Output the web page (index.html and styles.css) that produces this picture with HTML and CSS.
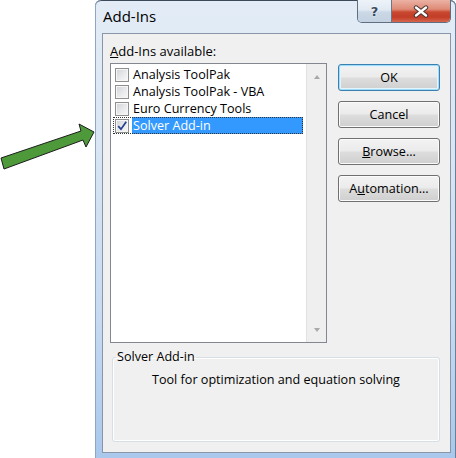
FILE: index.html
```html
<!DOCTYPE html>
<html lang="en">
<head>
<meta charset="utf-8">
<title>Add-Ins</title>
<link rel="stylesheet" href="styles.css">
</head>
<body>
<div class="stage">
  <svg class="arrow" width="100" height="180" viewBox="0 0 100 180" aria-hidden="true">
    <polygon points="1,158 81,131 79,124 94,132 86,147 83,140 4,169" fill="#4e9a3a" stroke="#1c1c1c" stroke-width="1" stroke-linejoin="miter"/>
  </svg>
  <div class="window">
    <div class="titlebar">
      <span class="title">Add-Ins</span>
      <div class="caps">
        <div class="cap help">?</div>
        <div class="cap close">
          <svg width="16" height="13" viewBox="0 0 16 13" aria-hidden="true">
            <path d="M3 2.5 L13 10.5 M13 2.5 L3 10.5" stroke="#4a3330" stroke-width="4.4" stroke-linecap="round"/>
            <path d="M3 2.5 L13 10.5 M13 2.5 L3 10.5" stroke="#ffffff" stroke-width="2.4" stroke-linecap="round"/>
          </svg>
        </div>
      </div>
    </div>
    <div class="client">
      <div class="top">
        <div class="lbl"><u>A</u>dd-Ins available:</div>
        <div class="listbox">
          <div class="items">
            <div class="item"><span class="cb"></span><span class="txt">Analysis ToolPak</span></div>
            <div class="item"><span class="cb"></span><span class="txt">Analysis ToolPak - VBA</span></div>
            <div class="item"><span class="cb"></span><span class="txt">Euro Currency Tools</span></div>
            <div class="item sel"><span class="cb">
              <svg width="12" height="12" viewBox="0 0 12 12" aria-hidden="true"><path d="M2.2 6.2 L5 9.2 L10.2 1.8" fill="none" stroke="#233f8c" stroke-width="1.7"/></svg>
            </span><span class="txt">Solver Add-in</span></div>
          </div>
          <div class="vscroll"><span class="up"></span><span class="down"></span></div>
        </div>
        <div class="buttons">
          <div class="btn default">OK</div>
          <div class="btn">Cancel</div>
          <div class="btn"><span><u>B</u>rowse...</span></div>
          <div class="btn"><span>A<u>u</u>tomation...</span></div>
        </div>
      </div>
      <fieldset class="group">
        <legend>Solver Add-in</legend>
        <p class="desc">Tool for optimization and equation solving</p>
      </fieldset>
    </div>
  </div>
</div>
</body>
</html>
```
FILE: styles.css
```css
* { box-sizing: border-box; }
html, body { margin: 0; padding: 0; background: #ffffff; }
body { font-family: "Open Sans", "Noto Sans", sans-serif; color: #000; }

.stage {
  position: relative;
  width: 456px;
  height: 458px;
  padding-left: 95px;
  overflow: hidden;
}
.arrow { position: absolute; left: 0; top: 0; }

.window {
  width: 361px;
  height: 458px;
  display: flex;
  flex-direction: column;
  padding-bottom: 5px;
  border-radius: 6px 6px 0 0;
  background: linear-gradient(180deg, #e3ecf6 0%, #dae6f3 30%, #c6daf1 70%, #a9c8ec 100%);
  box-shadow: inset 1px 0 0 #8ea6c3, inset -1px 0 0 #6d7f95, inset 0 1px 0 #3d4a5a;
}

.titlebar {
  height: 33px;
  display: flex;
  justify-content: space-between;
  padding: 0 5px 0 8px;
}
.title {
  margin-top: 6px;
  font-size: 15px;
  line-height: 20px;
}
.caps {
  width: 94px;
  height: 23px;
  display: flex;
  border: 1px solid #5f6e80;
  border-top: none;
  border-radius: 0 0 5px 5px;
  overflow: hidden;
}
.cap { display: flex; align-items: center; justify-content: center; }
.help {
  width: 34px;
  border-right: 1px solid #6b7686;
  background: linear-gradient(180deg, #eef3f9 0%, #e1e9f2 45%, #cbd8e6 55%, #c3d1e1 100%);
  font-family: "DejaVu Sans", sans-serif;
  font-weight: bold;
  font-size: 13px;
  color: #3a4b60;
  text-shadow: 0 0 2px #ffffff;
  padding-top: 1px;
}
.close {
  flex: 1;
  background: linear-gradient(180deg, #ebb2a4 0%, #de8a76 42%, #c9472f 55%, #c33d27 78%, #d6664f 100%);
}

.client {
  flex: 1;
  margin: 0 5px 0 7px;
  border: 1px solid #8796a8;
  background: #f0f0f0;
  padding: 9px 10px 0 7px;
  display: flex;
  flex-direction: column;
}

.top {
  display: grid;
  grid-template-columns: 217px 102px;
  column-gap: 11px;
}
.lbl {
  grid-column: 1 / span 2;
  font-size: 13px;
  line-height: 16px;
  margin-bottom: 4px;
}

.listbox {
  width: 217px;
  height: 280px;
  border: 1px solid #828790;
  background: #ffffff;
  display: flex;
}
.items {
  flex: 1;
  padding: 2px 3px 2px 2px;
}
.item {
  display: flex;
  align-items: center;
  height: 17px;
  padding-left: 2px;
  font-size: 12.6px;
}
.cb {
  width: 14px;
  height: 14px;
  margin-right: 3px;
  border: 1px solid #8e8f8f;
  background: linear-gradient(135deg, #cfd2d6 0%, #e9eaec 55%, #f8f8f8 100%);
  box-shadow: inset 0 0 0 1px #f6f6f6;
  display: flex;
  align-items: center;
  justify-content: center;
  flex: none;
}
.txt {
  flex: 1;
  height: 17px;
  line-height: 17px;
  padding-left: 1px;
  white-space: nowrap;
}
.item.sel {
  outline: 1px dotted #333;
  outline-offset: -1px;
}
.item.sel .txt { background: #3399ff; color: #ffffff; }

.vscroll {
  width: 20px;
  background: #efefef;
  border-left: 1px solid #e2e2e2;
  display: flex;
  flex-direction: column;
  justify-content: space-between;
  align-items: center;
  padding: 11px 0 10px;
}
.up, .down { width: 0; height: 0; border-left: 3.5px solid transparent; border-right: 3.5px solid transparent; }
.up { border-bottom: 4px solid #a9a9a9; }
.down { border-top: 4px solid #a9a9a9; }

.buttons {
  margin-top: 1px;
  display: flex;
  flex-direction: column;
  gap: 10px;
}
.btn {
  height: 27px;
  border: 1px solid #707070;
  border-radius: 3px;
  background: linear-gradient(180deg, #f3f3f3 0%, #ebebeb 48%, #dddddd 52%, #cfcfcf 100%);
  box-shadow: inset 0 0 0 1px #fbfbfb;
  display: flex;
  align-items: center;
  justify-content: center;
  font-size: 12.6px;
}
.btn.default {
  border-color: #3c7fb1;
  box-shadow: inset 0 0 0 1px #9fdcf6, inset 0 0 0 2px #e4f4fc;
}

.group {
  margin: 6px 0 0 2px;
  width: 328px;
  height: 93px;
  padding: 0;
  min-inline-size: 0;
  border: 1px solid #d5dfe5;
  border-radius: 3px;
  box-shadow: inset 0 0 0 1px #ffffff;
}
.group legend {
  margin-left: 3px;
  padding: 0 1px;
  font-size: 12.6px;
  line-height: 16px;
}
.desc {
  margin: 7px 0 0;
  text-align: center;
  font-size: 12.6px;
  line-height: 16px;
}
```
